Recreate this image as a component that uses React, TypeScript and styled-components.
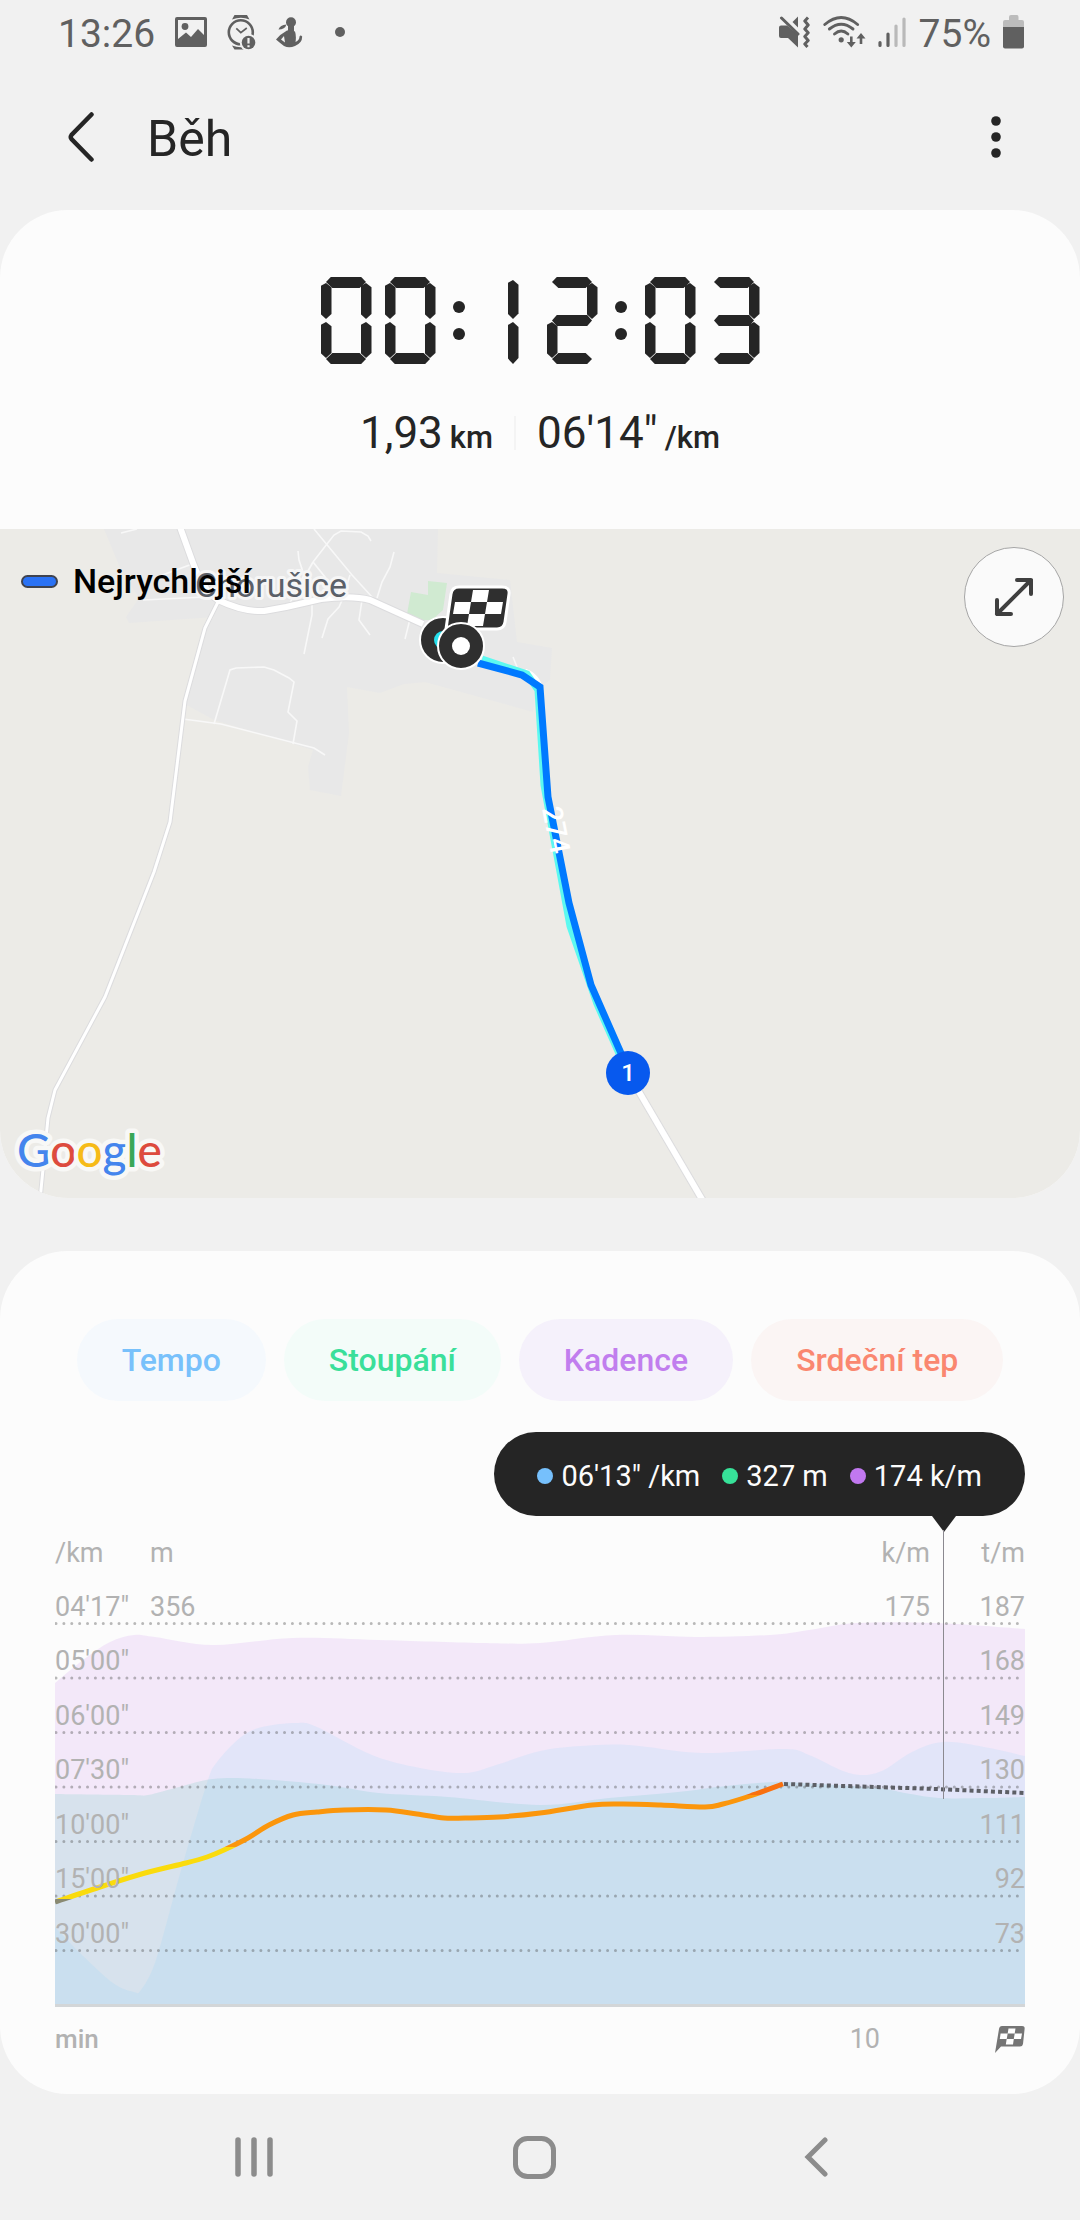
import React from "react";
import styled, { createGlobalStyle, css } from "styled-components";

const GlobalStyle = createGlobalStyle`
  *, *::before, *::after { box-sizing: border-box; }
  body {
    margin: 0;
    background: #f1f1f1;
    color: #252525;
    font-family: Roboto, "Noto Sans", sans-serif;
  }
  button {
    font: inherit;
    color: inherit;
    background: none;
    border: 0;
    padding: 0;
    cursor: pointer;
  }
  svg { display: block; flex: none; }
`;

const Screen = styled.div`
  display: flex;
  flex-direction: column;
  min-height: 100vh;
`;

/* ---------- status bar ---------- */

const StatusBar = styled.div`
  display: flex;
  justify-content: space-between;
  align-items: center;
  height: 64px;
  padding: 0 56px 0 58px;
  color: #606060;
`;

const StatusGroup = styled.div<{ $gap: number }>`
  display: flex;
  align-items: center;
  gap: ${(p) => p.$gap}px;
`;

const StatusText = styled.span`
  font-size: 39px;
  line-height: 48px;
  padding-top: 4px;
`;

const PictureIcon = () => (
  <svg width="32" height="30" viewBox="0 0 32 30" aria-hidden="true">
    <path
      fillRule="evenodd"
      fill="currentColor"
      d="M2 0H30Q32 0 32 2V28Q32 30 30 30H2Q0 30 0 28V2Q0 0 2 0ZM3 3V22L11 15.500L16 20L23 12L29 18V3Z"
    />
    <circle cx="10" cy="9.500" r="3.400" fill="currentColor" />
  </svg>
);

const WatchIcon = () => (
  <svg width="29" height="35" viewBox="0 0 29 35" aria-hidden="true">
    <path d="M5 4.500L7.500 0H20L22.500 4.500Q14 0.800 5 4.500Z" fill="currentColor" />
    <path d="M5 30.500L7.500 34.500H20L22.500 30.500Q14 34 5 30.500Z" fill="currentColor" />
    <circle cx="13.800" cy="17.300" r="12" fill="none" stroke="currentColor" strokeWidth="2.600" />
    <path d="M9.300 13.300L13.800 17.600L19.800 13" fill="none" stroke="currentColor" strokeWidth="1.700" />
    <circle cx="21.500" cy="27.500" r="8.800" fill="#f1f1f1" />
    <circle cx="21.500" cy="27.500" r="6.800" fill="currentColor" />
    <path d="M21.500 23V28.600M21.500 30.200V32.200" stroke="#f1f1f1" strokeWidth="2.200" />
  </svg>
);

const ExerciseIcon = () => (
  <svg width="27" height="31" viewBox="0 0 27 31" aria-hidden="true">
    <circle cx="15" cy="5.200" r="5" fill="currentColor" />
    <path d="M10.500 7.500Q9 12.500 2.500 12.500Q4 8 10.500 7.500Z" fill="currentColor" />
    <path d="M12 8H18V14H12Z" fill="currentColor" />
    <path
      fillRule="evenodd"
      fill="currentColor"
      d="M11 13.500Q15 12.500 19 14.500Q20.500 19 19.500 25Q23.500 23 23.500 19.500Q24.500 17.500 26.200 19.500Q26.200 26 19 29Q13 31.500 8 29Q4 26 0 22.500Q4.500 17 11 13.500ZM8 19L5 22.500L9 25.500Z"
    />
  </svg>
);

const MoreNotifications = styled.span`
  width: 10px;
  height: 10px;
  margin-left: 12px;
  border-radius: 50%;
  background: currentColor;
`;

const MuteIcon = () => (
  <svg width="32" height="32" viewBox="0 0 32 32" aria-hidden="true">
    <path d="M2 9.500H8L19 18.500V31.500L9 22H2Q0 22 0 20V11.500Q0 9.500 2 9.500Z" fill="currentColor" />
    <path d="M2.500 2L19 18" stroke="currentColor" strokeWidth="3" strokeLinecap="round" />
    <path d="M13.500 6L19 0.500V11.500Z" fill="currentColor" />
    <path
      d="M29 1.500L25.800 5L29.200 9L25.800 13L29.200 16.800L25.800 20.500L29.200 24.500L25.800 28L28.500 31"
      fill="none"
      stroke="currentColor"
      strokeWidth="3"
      strokeLinejoin="round"
    />
  </svg>
);

const WifiIcon = () => (
  <svg width="43" height="34" viewBox="0 0 43 34" aria-hidden="true">
    <g fill="none" stroke="currentColor" strokeWidth="2.900" strokeLinecap="round">
      <path d="M1.800 9.500Q18.200 -4.500 34.600 9.500" />
      <path d="M6.400 14Q18.200 4.500 30 14" />
      <path d="M11.500 19Q18.200 13 24.900 19" />
    </g>
    <circle cx="18.200" cy="24.800" r="2.600" fill="currentColor" />
    <path d="M27 21.500H29.600V27H32.800L28.300 32.500L23.800 27H27Z" fill="currentColor" />
    <path d="M36.700 29V23.500H33.500L38 18L42.500 23.500H39.300V29Z" fill="currentColor" />
  </svg>
);

const SignalIcon = () => (
  <svg width="29" height="32" viewBox="0 0 29 32" aria-hidden="true">
    <g strokeWidth="3.200" strokeLinecap="round">
      <path d="M2 26.500V29.500M10 18V29.500" stroke="#606060" />
      <path d="M18 10V29.500M26 3V29.500" stroke="#b9b9b9" />
    </g>
  </svg>
);

const BatteryIcon = () => (
  <svg width="21" height="34" viewBox="0 0 21 34" aria-hidden="true">
    <path d="M6 2Q6 0 8 0H14Q15.500 0 15.500 2V5H19Q21 5 21 7V13H0V7Q0 5 2 5H6Z" fill="#bcbcbc" />
    <path d="M0 12H21V31.500Q21 33.500 19 33.500H2Q0 33.500 0 31.500Z" fill="#606060" />
  </svg>
);

/* ---------- app bar ---------- */

const AppBar = styled.header`
  display: flex;
  align-items: center;
  height: 146px;
  padding: 0 58px 0 55px;
`;

const IconButton = styled.button`
  display: flex;
  align-items: center;
  justify-content: center;
  width: 52px;
  height: 72px;
`;

const Title = styled.h1`
  flex: 1;
  margin: 0;
  padding: 4px 0 0 40px;
  font-size: 50px;
  line-height: 60px;
  font-weight: 400;
`;

/* ---------- cards ---------- */

const Card = styled.section`
  background: #fcfcfc;
  border-radius: 68px;
  overflow: hidden;
`;

const Summary = styled.div`
  display: flex;
  flex-direction: column;
  align-items: center;
  gap: 43px;
  padding: 67px 0 70px;
`;

/* ---------- seven-segment clock ---------- */

const ClockFace = styled.div`
  display: flex;
  align-items: center;
`;

const DigitBox = styled.span`
  display: grid;
  width: 51px;
  height: 87px;
  & + & { margin-left: 13px; }
`;

const horizontal = css`
  width: 40px;
  height: 11px;
  justify-self: center;
  clip-path: polygon(0 45%, 12% 0, 88% 0, 100% 45%, 84% 100%, 16% 100%);
`;

const vertical = css`
  width: 11px;
  height: 36px;
  clip-path: polygon(50% 0, 100% 12%, 100% 86%, 50% 100%, 0 86%, 0 8%);
`;

const placements: Record<string, ReturnType<typeof css>> = {
  a: css`${horizontal} align-self: start;`,
  g: css`${horizontal} align-self: center; clip-path: polygon(0 50%, 12% 0, 88% 0, 100% 50%, 88% 100%, 12% 100%);`,
  d: css`${horizontal} align-self: end; clip-path: polygon(0 55%, 16% 0, 84% 0, 100% 55%, 88% 100%, 12% 100%);`,
  f: css`${vertical} justify-self: start; align-self: start; margin-top: 6px;`,
  b: css`${vertical} justify-self: end; align-self: start; margin-top: 6px;`,
  e: css`${vertical} justify-self: start; align-self: end; margin-bottom: 6px;`,
  c: css`${vertical} justify-self: end; align-self: end; margin-bottom: 6px;`,
  i: css`${vertical} height: 39px; justify-self: end; align-self: start; margin: 3px 15px 0 0;`,
  j: css`${vertical} height: 42px; justify-self: end; align-self: end; margin-right: 15px;`,
};

const Segment = styled.span<{ $at: string }>`
  grid-area: 1 / 1;
  background: #252525;
  ${(p) => placements[p.$at]}
`;

const Colon = styled.span`
  display: flex;
  flex-direction: column;
  align-items: center;
  gap: 15px;
  width: 47px;
  &::before, &::after {
    content: "";
    width: 12px;
    height: 12px;
    border-radius: 50%;
    background: #252525;
  }
`;

const SEGMENTS: Record<string, string> = {
  "0": "abcdef",
  "1": "ij",
  "2": "abged",
  "3": "abgcd",
};

const Clock = ({ value }: { value: string }) => (
  <ClockFace role="timer" aria-label={value}>
    {value.split("").map((ch, i) =>
      ch === ":" ? (
        <Colon key={i} />
      ) : (
        <DigitBox key={i}>
          {SEGMENTS[ch].split("").map((s) => (
            <Segment key={s} $at={s} />
          ))}
        </DigitBox>
      )
    )}
  </ClockFace>
);

const Stats = styled.div`
  display: flex;
  align-items: center;
  gap: 21px;
`;

const Stat = styled.span`
  font-size: 44px;
  line-height: 52px;
  white-space: nowrap;
`;

const Unit = styled.span`
  margin-left: 7px;
  font-size: 31px;
  line-height: 1;
  font-weight: 500;
`;

const StatDivider = styled.span`
  width: 2px;
  height: 34px;
  background: #f4f4f4;
`;

/* ---------- map ---------- */

const MapFrame = styled.div`
  position: relative;
  aspect-ratio: 1080 / 669;
  background: #ecebe7;
`;

const MapDrawing = styled.svg`
  width: 100%;
  height: 100%;
`;

const Legend = styled.div`
  position: absolute;
  top: 32px;
  left: 21px;
  display: flex;
  align-items: center;
  gap: 15px;
  color: #000;
  font-size: 34px;
  line-height: 40px;
  font-weight: 500;
`;

const LegendMark = styled.span`
  width: 37px;
  height: 13px;
  border: 2px solid #3f4350;
  border-radius: 7px;
  background: #2a72f5;
`;

const ExpandButton = styled.button`
  position: absolute;
  top: 18px;
  right: 16px;
  display: flex;
  align-items: center;
  justify-content: center;
  width: 100px;
  height: 100px;
  border: 1px solid #a5a5a5;
  border-radius: 50%;
  background: #fafafa;
`;

const LANES = [
  "121,533 137,529",
  "314,529 352,575 373,598",
  "313,562 327,544 334,535 341,531 361,532 368,536 371,541",
  "298,551 299,560 304,575 290,603",
  "394,552 390,567 382,582 377,598",
  "313,562 325,577 332,592",
  "313,562 303,580",
  "312,603 312,615 304,654",
  "350,575 343,598 339,607 328,619 322,638",
  "362,600 359,620 370,635",
  "410,619 405,639",
  "143,600 205,597",
  "157,577 195,563",
  "214,724 230,670 236,668 264,667 274,670 289,678 294,682 288,712 297,721 293,744",
  "183,719 221,724 314,748 325,755",
  "513,657 517,667",
];

const MAIN_ROAD = "M180 527L193 563Q203 590 218 600Q243 612 264 611L286 607L321 599Q352 595 370 600L423 624";
const SIDE_ROAD = "M218 602L205 628L185 701L170 822L154 872L105 997L55 1090L48 1118L40 1200";
const SOUTH_ROAD = "M628 1073L703 1201";

const GOOGLE: [string, string][] = [
  ["G", "#4485ed"],
  ["o", "#dd4b3e"],
  ["o", "#f6bb18"],
  ["g", "#4485ed"],
  ["l", "#3aa757"],
  ["e", "#dd4b3e"],
];

const RouteMap = () => (
  <MapDrawing viewBox="0 529 1080 669" role="img" aria-label="Chorušice">
    <path
      d="M104 529L121 570L139 598L126 617L129 623L214 617L205 628L185 704L214 720L313 750L308 767L310 790L341 796L349 733L347 687L380 693L404 684L425 682L533 712L536 690L550 680L552 648L517 642L510 580L437 573L438 529Z"
      fill="#e8e8e8"
    />
    <path d="M428 581L447 583L443 610L432 620L420 620L407 614L411 592L428 595Z" fill="#d0ead1" />
    <g fill="none" stroke="#f8f8f8" strokeWidth="1.600">
      {LANES.map((p) => (
        <polyline key={p} points={p} />
      ))}
    </g>
    <g fill="none" stroke="#dcdcde" strokeLinejoin="round">
      <path d={SIDE_ROAD} strokeWidth="5" />
      <path d={MAIN_ROAD} strokeWidth="8" />
      <path d={SOUTH_ROAD} strokeWidth="8" />
    </g>
    <g fill="none" stroke="#fff" strokeLinejoin="round">
      <path d={SIDE_ROAD} strokeWidth="3" />
      <path d={MAIN_ROAD} strokeWidth="6" />
      <path d={SOUTH_ROAD} strokeWidth="6" />
      <path d="M525 671Q538 676 541 690" strokeWidth="5" />
    </g>
    <text
      x="195"
      y="597"
      fontSize="34"
      fill="#5b6068"
      stroke="#f6f6f6"
      strokeWidth="6"
      strokeLinejoin="round"
      paintOrder="stroke"
    >
      Chorušice
    </text>
    <polyline
      points="482,659 527,674 538,690 544,785 570,926 597,1004 621,1058"
      fill="none"
      stroke="#5cf9f0"
      strokeWidth="7"
    />
    <polyline
      points="478,663 522,675 540,687 548,797 569,903 591,985 624,1060"
      fill="none"
      stroke="#0079ff"
      strokeWidth="7"
    />
    <text
      x="556"
      y="830"
      fontSize="28"
      fontWeight="500"
      fill="#fff"
      textAnchor="middle"
      dominantBaseline="central"
      transform="rotate(79 556 830)"
    >
      274
    </text>
    <circle cx="443" cy="640" r="23" fill="#2f2f2f" stroke="#fff" strokeWidth="2" />
    <circle cx="443" cy="640" r="9" fill="#25dfec" />
    <path
      d="M459 587H502Q510 587 509 594L505 622Q504 629 497 629H446L451 594Q452 587 459 587Z"
      fill="#2f2f2f"
      stroke="#fff"
      strokeWidth="3"
    />
    <path
      d="M473 590H489L487 602H471ZM455 602H471L469 614H453ZM487 602H503L501 614H485ZM469 614H485L483 626H467Z"
      fill="#fff"
    />
    <circle cx="461" cy="646" r="23" fill="#2f2f2f" stroke="#fff" strokeWidth="2" />
    <circle cx="461" cy="646" r="9" fill="#fff" />
    <circle cx="628" cy="1073" r="22" fill="#0759ee" />
    <text x="628" y="1081" fontSize="24" fontWeight="500" fill="#fff" textAnchor="middle">
      1
    </text>
    <text
      x="17"
      y="1167"
      fontFamily="Lato, sans-serif"
      fontSize="46"
      fontWeight="500"
      stroke="#f8f8f6"
      strokeWidth="9"
      strokeLinejoin="round"
      paintOrder="stroke"
    >
      {GOOGLE.map(([ch, fill], i) => (
        <tspan key={i} fill={fill}>
          {ch}
        </tspan>
      ))}
    </text>
  </MapDrawing>
);

/* ---------- chart card ---------- */

const ChartCard = styled(Card)`
  display: flex;
  flex-direction: column;
  margin-top: 53px;
  padding: 68px 55px 39px;
`;

const Chips = styled.div`
  display: flex;
  justify-content: center;
  gap: 18px;
`;

const Chip = styled.button<{ $ink: string; $fill: string }>`
  height: 82px;
  padding: 0 45px;
  border-radius: 41px;
  background: ${(p) => p.$fill};
  color: ${(p) => p.$ink};
  font-size: 32px;
  font-weight: 500;
`;

const Chart = styled.div`
  position: relative;
  display: flex;
  flex-direction: column;
  margin-top: 31px;
`;

const Tooltip = styled.div`
  position: relative;
  align-self: flex-end;
  display: flex;
  align-items: center;
  gap: 22px;
  height: 84px;
  padding: 4px 43px 0;
  margin-bottom: 21px;
  border-radius: 42px;
  background: #252525;
  color: #fcfcfc;
  font-size: 29px;
  line-height: 36px;
  white-space: nowrap;
  &::after {
    content: "";
    position: absolute;
    top: 100%;
    right: 69px;
    border: solid transparent;
    border-width: 16px 12px 0;
    border-top-color: #252525;
  }
`;

const Reading = styled.span<{ $dot: string }>`
  display: flex;
  align-items: center;
  gap: 8px;
  &::before {
    content: "";
    width: 16px;
    height: 16px;
    border-radius: 50%;
    background: ${(p) => p.$dot};
  }
`;

const Cursor = styled.span`
  position: absolute;
  top: 98px;
  right: 81px;
  width: 1px;
  height: 269px;
  background: #8b8990;
`;

const ScaleRow = styled.div`
  display: grid;
  grid-template-columns: 95px 1fr 1fr 95px;
  align-items: end;
  color: #b2b2b2;
  font-size: 27px;
  line-height: 32px;
`;

const Right = styled.span`
  text-align: right;
`;

const Plot = styled.div`
  display: grid;
`;

const PlotDrawing = styled.svg`
  grid-area: 1 / 1;
  width: 100%;
  height: 438px;
`;

const Scales = styled.div`
  grid-area: 1 / 1;
  display: grid;
  grid-template-rows: repeat(8, 1fr);
  padding-bottom: 2px;
`;

const PlotRow = styled(ScaleRow)`
  padding-bottom: 1px;
`;

const TimeAxis = styled.div`
  display: flex;
  align-items: center;
  margin-top: 16px;
  color: #b2b2b2;
  font-size: 27px;
  line-height: 32px;
`;

const AxisName = styled.span`
  flex: 1;
  font-size: 26px;
  font-weight: 500;
`;

const TickLabel = styled.span`
  margin-right: 115px;
`;

type Point = [number, number];

const CADENCE: Point[] = [
  [0, 114], [28, 91], [55, 73], [79, 66], [100, 68], [158, 76], [238, 69], [324, 71], [427, 74], [485, 74],
  [561, 66], [640, 68], [715, 66], [754, 61], [802, 54], [881, 54], [970, 60],
];

const PACE: Point[] = [
  [0, 358], [24, 383], [58, 414], [79, 423], [86, 421], [100, 394], [117, 334], [129, 291], [152, 214],
  [162, 193], [186, 168], [207, 158], [241, 154], [262, 158], [317, 186], [365, 199], [410, 204], [441, 196],
  [485, 182], [526, 177], [574, 176], [647, 184], [729, 180], [754, 186], [788, 202], [809, 206], [829, 201],
  [857, 183], [888, 173], [929, 178], [970, 187],
];

const CLIMB: Point[] = [
  [0, 225], [76, 226], [93, 226], [124, 218], [158, 210], [203, 210], [272, 216], [324, 224], [393, 228],
  [485, 236], [554, 229], [623, 223], [671, 217], [719, 213], [747, 214], [822, 219], [850, 224], [884, 229],
  [933, 229], [970, 228],
];

const HEART: Point[] = [
  [0, 333], [48, 317], [90, 304], [131, 294], [152, 288], [169, 281], [193, 269], [214, 256], [238, 246],
  [262, 243], [289, 241], [331, 241], [362, 245], [389, 249], [410, 249], [444, 248], [485, 244], [537, 236],
  [568, 235], [606, 236], [650, 238], [668, 235], [695, 227], [728, 215],
];

// Catmull-Rom spline through the samples, written as cubic Béziers.
const spline = (pts: Point[]) => {
  const at = (i: number) => pts[Math.max(0, Math.min(pts.length - 1, i))];
  let d = `M${pts[0][0]} ${pts[0][1]}`;
  for (let i = 0; i < pts.length - 1; i++) {
    const [p0, p1, p2, p3] = [at(i - 1), at(i), at(i + 1), at(i + 2)];
    d += `C${p1[0] + (p2[0] - p0[0]) / 6} ${p1[1] + (p2[1] - p0[1]) / 6} ${p2[0] - (p3[0] - p1[0]) / 6} ${
      p2[1] - (p3[1] - p1[1]) / 6
    } ${p2[0]} ${p2[1]}`;
  }
  return d;
};

const area = (pts: Point[]) => `${spline(pts)}V438H0Z`;

const ROWS = [
  ["04'17\"", "356", "175", "187"],
  ["05'00\"", "", "", "168"],
  ["06'00\"", "", "", "149"],
  ["07'30\"", "", "", "130"],
  ["10'00\"", "", "", "111"],
  ["15'00\"", "", "", "92"],
  ["30'00\"", "", "", "73"],
];

const PlotCurves = () => (
  <PlotDrawing viewBox="0 0 970 438" preserveAspectRatio="none" aria-hidden="true">
    <defs>
      <linearGradient id="zones" gradientUnits="userSpaceOnUse" x1="0" y1="0" x2="0" y2="438">
        <stop offset="0.516" stopColor="#f9700f" />
        <stop offset="0.516" stopColor="#fb960c" />
        <stop offset="0.634" stopColor="#fb960c" />
        <stop offset="0.634" stopColor="#fadb0d" />
        <stop offset="0.754" stopColor="#fadb0d" />
        <stop offset="0.754" stopColor="#8a8a72" />
      </linearGradient>
    </defs>
    <path d={area(CADENCE)} fill="#c178ee" fillOpacity="0.15" />
    <path d={area(CLIMB)} fill="#37c0a8" fillOpacity="0.144" />
    <path d={area(PACE)} fill="#76d0fc" fillOpacity="0.128" />
    <g stroke="#4a4a4a" strokeOpacity="0.38" strokeWidth="3" strokeDasharray="0 7.88" strokeLinecap="round">
      {ROWS.map((_, i) => (
        <path key={i} d={`M1 ${54.5 * (i + 1)}H970`} />
      ))}
    </g>
    <path d="M0 436.500H970" stroke="#d3d6d8" strokeWidth="3" />
    <path d={spline(HEART)} fill="none" stroke="url(#zones)" strokeWidth="5" />
    <path d="M729 215L881 220L970 224" fill="none" stroke="#5d5f66" strokeWidth="4" strokeDasharray="4 3.140" />
  </PlotDrawing>
);

const FinishFlag = () => (
  <svg width="30" height="27" viewBox="0 0 30 27" aria-hidden="true">
    <path d="M7 0H27Q30 0 29.600 3L28 18Q27.500 20.500 25 20.500H6L0 27L4 3Q4.500 0 7 0Z" fill="#757575" />
    <path
      d="M13.500 2.500H20.500L19.700 7.500H12.700ZM5.600 7.500H12.700L11.700 13H4.800ZM19.700 7.500H27L26 13H18.800ZM11.700 13H18.800L18 18.500H10.800Z"
      fill="#fff"
    />
  </svg>
);

const CHIPS = [
  { label: "Tempo", ink: "#78c1fb", fill: "#f5f9fd" },
  { label: "Stoupání", ink: "#3adf9a", fill: "#f3fcf9" },
  { label: "Kadence", ink: "#c17eee", fill: "#f5f1fb" },
  { label: "Srdeční tep", ink: "#fa8770", fill: "#fbf5f4" },
];

/* ---------- system navigation ---------- */

const NavBar = styled.nav`
  display: grid;
  grid-template-columns: repeat(3, 1fr);
  justify-items: center;
  align-items: center;
  height: 126px;
  padding: 0 123px 0 113px;
  color: #8c8c8c;
`;

export default function App() {
  return (
    <Screen>
      <GlobalStyle />
      <StatusBar>
        <StatusGroup $gap={20}>
          <StatusText>13:26</StatusText>
          <PictureIcon />
          <WatchIcon />
          <ExerciseIcon />
          <MoreNotifications />
        </StatusGroup>
        <StatusGroup $gap={12}>
          <MuteIcon />
          <WifiIcon />
          <SignalIcon />
          <StatusText>75%</StatusText>
          <BatteryIcon />
        </StatusGroup>
      </StatusBar>

      <AppBar>
        <IconButton aria-label="Zpět">
          <svg width="26" height="50" viewBox="0 0 26 50" aria-hidden="true">
            <path
              d="M23.500 2.500L3.500 23Q2 25 3.500 27L23.500 47.500"
              fill="none"
              stroke="#252525"
              strokeWidth="4.500"
              strokeLinecap="round"
            />
          </svg>
        </IconButton>
        <Title>Běh</Title>
        <IconButton aria-label="Další možnosti">
          <svg width="10" height="42" viewBox="0 0 10 42" fill="#252525" aria-hidden="true">
            <circle cx="5" cy="5" r="4.800" />
            <circle cx="5" cy="21" r="4.800" />
            <circle cx="5" cy="37" r="4.800" />
          </svg>
        </IconButton>
      </AppBar>

      <main>
        <Card>
          <Summary>
            <Clock value="00:12:03" />
            <Stats>
              <Stat>
                1,93<Unit>km</Unit>
              </Stat>
              <StatDivider />
              <Stat>
                06'14"<Unit>/km</Unit>
              </Stat>
            </Stats>
          </Summary>
          <MapFrame>
            <RouteMap />
            <Legend>
              <LegendMark />
              Nejrychlejší
            </Legend>
            <ExpandButton aria-label="Zvětšit mapu">
              <svg width="40" height="40" viewBox="0 0 40 40" aria-hidden="true">
                <path
                  d="M23 3H37V17M37 3L3 37M3 23V37H17"
                  fill="none"
                  stroke="#3f3f3f"
                  strokeWidth="4"
                  strokeLinecap="round"
                  strokeLinejoin="round"
                />
              </svg>
            </ExpandButton>
          </MapFrame>
        </Card>

        <ChartCard>
          <Chips>
            {CHIPS.map((c) => (
              <Chip key={c.label} $ink={c.ink} $fill={c.fill}>
                {c.label}
              </Chip>
            ))}
          </Chips>
          <Chart>
            <Tooltip>
              <Reading $dot="#76c0fc">06'13" /km</Reading>
              <Reading $dot="#37e299">327 m</Reading>
              <Reading $dot="#c178f0">174 k/m</Reading>
            </Tooltip>
            <ScaleRow>
              <span>/km</span>
              <span>m</span>
              <Right>k/m</Right>
              <Right>t/m</Right>
            </ScaleRow>
            <Plot>
              <PlotCurves />
              <Scales>
                {ROWS.map(([pace, climb, cadence, heart]) => (
                  <PlotRow key={pace}>
                    <span>{pace}</span>
                    <span>{climb}</span>
                    <Right>{cadence}</Right>
                    <Right>{heart}</Right>
                  </PlotRow>
                ))}
              </Scales>
            </Plot>
            <Cursor />
          </Chart>
          <TimeAxis>
            <AxisName>min</AxisName>
            <TickLabel>10</TickLabel>
            <FinishFlag />
          </TimeAxis>
        </ChartCard>
      </main>

      <NavBar>
        <IconButton aria-label="Poslední aplikace">
          <svg width="38" height="40" viewBox="0 0 38 40" aria-hidden="true">
            <path
              d="M3 3V37M19 3V37M35 3V37"
              stroke="currentColor"
              strokeWidth="5.500"
              strokeLinecap="round"
            />
          </svg>
        </IconButton>
        <IconButton aria-label="Domů">
          <svg width="43" height="43" viewBox="0 0 43 43" aria-hidden="true">
            <rect
              x="2.500"
              y="2.500"
              width="38"
              height="38"
              rx="12"
              fill="none"
              stroke="currentColor"
              strokeWidth="5"
            />
          </svg>
        </IconButton>
        <IconButton aria-label="Zpět">
          <svg width="24" height="40" viewBox="0 0 24 40" aria-hidden="true">
            <path
              d="M21 3L4 20L21 37"
              fill="none"
              stroke="currentColor"
              strokeWidth="5"
              strokeLinecap="round"
            />
          </svg>
        </IconButton>
      </NavBar>
    </Screen>
  );
}
